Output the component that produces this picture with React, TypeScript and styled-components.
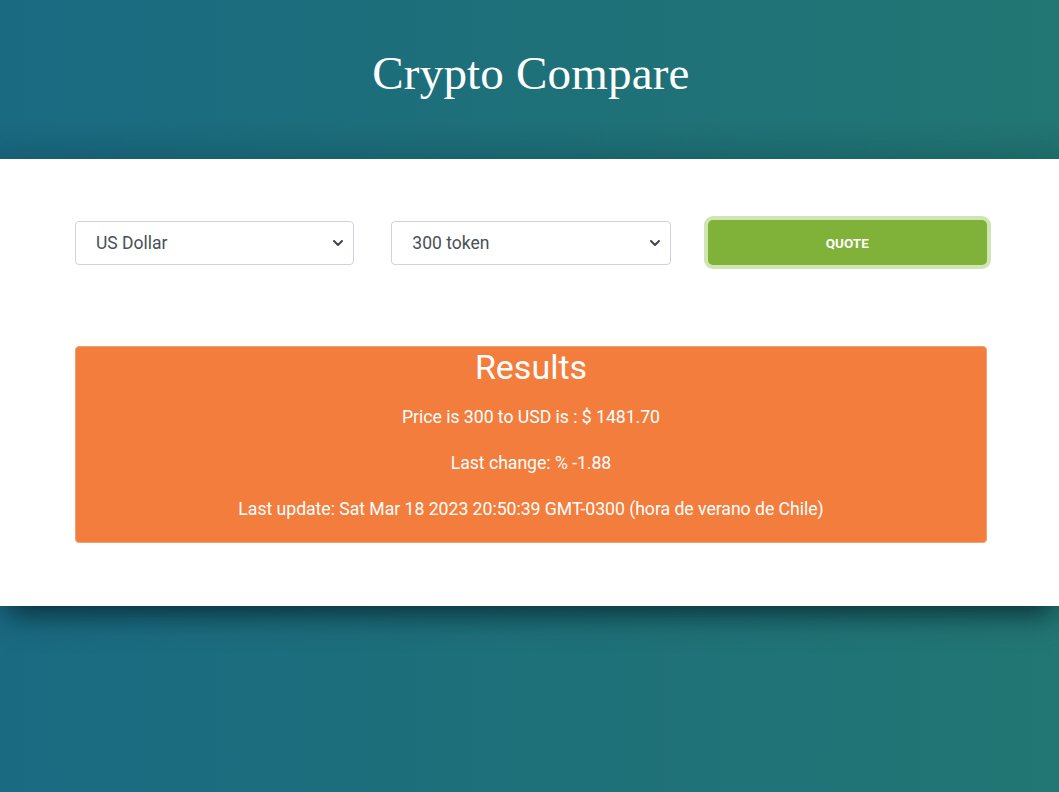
import React, { useState } from "react";
import styled, { createGlobalStyle } from "styled-components";
import { ChevronDown } from "lucide-react";

const GlobalStyle = createGlobalStyle`
  html, body {
    margin: 0;
    padding: 0;
    min-height: 100%;
  }
  body {
    font-family: Roboto, "Liberation Sans", sans-serif;
    background: linear-gradient(to right, #1a6a82 0%, #1e7079 50%, #227673 100%);
    min-height: 792px;
  }
  * { box-sizing: border-box; }
`;

const Page = styled.div`
  min-height: 792px;
  display: flex;
  flex-direction: column;
`;

const Header = styled.header`
  height: 159px;
  display: flex;
  align-items: center;
  justify-content: center;
  padding-left: 3px;
  background: linear-gradient(to bottom, rgba(0, 0, 0, 0) 0%, rgba(0, 0, 0, 0) 75%, rgba(0, 20, 30, 0.1) 100%);
`;

const Title = styled.h1`
  margin: 0;
  padding-bottom: 14px;
  font-family: "Liberation Serif", "DejaVu Serif", serif;
  font-weight: 400;
  font-size: 47px;
  color: #ffffff;
  letter-spacing: 0.2px;
`;

const Main = styled.main`
  background: #ffffff;
  height: 447px;
  padding: 61px 0 0 3px;
  box-shadow: 0 14px 26px -6px rgba(5, 30, 40, 0.8);
  position: relative;
  z-index: 1;
`;

const Container = styled.div`
  width: 912px;
  margin: 0 auto;
`;

const FormRow = styled.form`
  display: grid;
  grid-template-columns: repeat(3, 1fr);
  column-gap: 37px;
  align-items: center;
`;

const SelectWrap = styled.div`
  position: relative;
  height: 44px;
`;

const Select = styled.select`
  appearance: none;
  -webkit-appearance: none;
  width: 100%;
  height: 44px;
  border: 1px solid #ced4da;
  border-radius: 4px;
  background: #ffffff;
  padding: 0 36px 0 20px;
  font-family: Roboto, "Liberation Sans", sans-serif;
  font-size: 17.5px;
  color: #495057;
  outline: none;
`;

const Chevron = styled.span`
  position: absolute;
  right: 8px;
  top: 50%;
  transform: translateY(-50%);
  display: flex;
  color: #3f464d;
  pointer-events: none;
`;

const QuoteButton = styled.button`
  height: 45px;
  width: 100%;
  border: none;
  border-radius: 5px;
  background: #80b138;
  color: #ffffff;
  font-family: Roboto, "Liberation Sans", sans-serif;
  font-weight: 700;
  font-size: 13.5px;
  letter-spacing: 0;
  box-shadow: 0 0 0 4px #cfe5b4;
  cursor: pointer;
`;

const Results = styled.section`
  margin-top: 81px;
  height: 197px;
  background: #f37d3d;
  border: 1px solid #f0a070;
  border-radius: 4px;
  color: #ffffff;
  text-align: center;
`;

const ResultsTitle = styled.h2`
  margin: 0;
  font-weight: 400;
  font-size: 34px;
  line-height: 40px;
`;

const Line = styled.p`
  margin: 0;
  font-size: 17.7px;
  line-height: 46px;
  letter-spacing: -0.05px;
  &:first-of-type {
    margin-top: 7px;
  }
`;

const Footer = styled.footer`
  flex: 1;
  min-height: 186px;
`;

export default function App() {
  const [currency, setCurrency] = useState("USD");
  const [token, setToken] = useState("300");

  return (
    <Page>
      <GlobalStyle />
      <Header>
        <Title>Crypto Compare</Title>
      </Header>
      <Main>
        <Container>
          <FormRow onSubmit={(e) => e.preventDefault()}>
            <SelectWrap>
              <Select value={currency} onChange={(e) => setCurrency(e.target.value)}>
                <option value="USD">US Dollar</option>
                <option value="EUR">Euro</option>
                <option value="CLP">Peso Chileno</option>
              </Select>
              <Chevron>
                <ChevronDown size={16} strokeWidth={3} />
              </Chevron>
            </SelectWrap>
            <SelectWrap>
              <Select value={token} onChange={(e) => setToken(e.target.value)}>
                <option value="300">300 token</option>
                <option value="BTC">Bitcoin</option>
                <option value="ETH">Ethereum</option>
              </Select>
              <Chevron>
                <ChevronDown size={16} strokeWidth={3} />
              </Chevron>
            </SelectWrap>
            <QuoteButton type="submit">QUOTE</QuoteButton>
          </FormRow>
          <Results>
            <ResultsTitle>Results</ResultsTitle>
            <Line>Price is 300 to USD is : $ 1481.70</Line>
            <Line>Last change: % -1.88</Line>
            <Line>Last update: Sat Mar 18 2023 20:50:39 GMT-0300 (hora de verano de Chile)</Line>
          </Results>
        </Container>
      </Main>
      <Footer />
    </Page>
  );
}
